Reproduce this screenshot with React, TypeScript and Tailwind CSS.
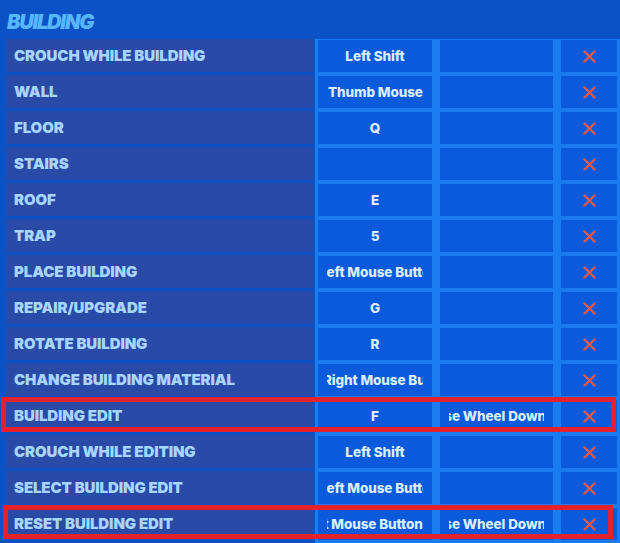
import React from "react";

interface Binding {
  label: string;
  primary?: string;
  secondary?: string;
  // offset classes for key names that are mid-scroll inside a narrow slot
  primaryShift?: string;
  secondaryShift?: string;
}

const bindings: Binding[] = [
  { label: "Crouch While Building", primary: "Left Shift" },
  { label: "Wall", primary: "Thumb Mouse Button", primaryShift: "justify-start ml-[1px]" },
  { label: "Floor", primary: "Q" },
  { label: "Stairs" },
  { label: "Roof", primary: "E" },
  { label: "Trap", primary: "5" },
  { label: "Place Building", primary: "Left Mouse Button", primaryShift: "justify-start -ml-[8px]" },
  { label: "Repair/Upgrade", primary: "G" },
  { label: "Rotate Building", primary: "R" },
  { label: "Change Building Material", primary: "Right Mouse Button", primaryShift: "justify-start -ml-[4px]" },
  {
    label: "Building Edit",
    primary: "F",
    secondary: "Mouse Wheel Down",
    secondaryShift: "justify-start -ml-[34px]",
  },
  { label: "Crouch While Editing", primary: "Left Shift" },
  { label: "Select Building Edit", primary: "Left Mouse Button", primaryShift: "justify-start -ml-[8px]" },
  {
    label: "Reset Building Edit",
    primary: "Left Mouse Button",
    primaryShift: "justify-start -ml-[24px]",
    secondary: "Mouse Wheel Down",
    secondaryShift: "justify-start -ml-[34px]",
  },
];

function KeySlot({ value, shift, wide }: { value?: string; shift?: string; wide: boolean }) {
  return (
    <div className={`${wide ? "w-[114px]" : "w-[113px]"} h-[32px] bg-[#0a5adb] px-[9px]`}>
      <div className="h-full overflow-hidden">
        <div
          className={`flex h-full items-center whitespace-nowrap ${shift ?? "justify-center"} text-[13.5px] font-extrabold tracking-[-0.1px] text-[#d9eeff]`}
        >
          {value}
        </div>
      </div>
    </div>
  );
}

function ClearButton() {
  return (
    <div className="flex h-[32px] w-[56px] items-center justify-center bg-[#0a5adb]">
      <svg width="15" height="15" viewBox="0 0 15 15">
        <path d="M2.5 2.5 L12.5 12.5 M12.5 2.5 L2.5 12.5" stroke="#e05a4c" strokeWidth="2.4" strokeLinecap="round" />
      </svg>
    </div>
  );
}

function BindingRow({ item }: { item: Binding }) {
  return (
    <div className="flex h-[36px]">
      <div className="ml-[6px] flex h-[33px] w-[307px] items-center bg-[#2a4aa8] pl-[8px] pt-[1px] text-[15px] font-black uppercase tracking-[-0.1px] text-[#a8d5ff]">
        {item.label}
      </div>
      <div className="ml-[2px] flex flex-1 gap-[8px] bg-[#1a7cf0] pl-[3px] pt-[1px]">
        <KeySlot value={item.primary} shift={item.primaryShift} wide />
        <KeySlot value={item.secondary} shift={item.secondaryShift} wide={false} />
        <ClearButton />
      </div>
    </div>
  );
}

export default function App() {
  return (
    <div
      className="relative h-[543px] w-[620px] overflow-hidden bg-[#0b52c6]"
      style={{ fontFamily: "Inter, \"Liberation Sans\", sans-serif" }}
    >
      <div className="flex h-[39px] items-center pl-[7px] pt-[4px]">
        <h1 className="text-[20px] font-black italic tracking-[-1.2px] text-[#58b6ff]">BUILDING</h1>
      </div>
      <div className="flex flex-col">
        {bindings.map((item) => (
          <BindingRow key={item.label} item={item} />
        ))}
      </div>

      {/* highlight frames over the edit rows */}
      <div className="pointer-events-none absolute left-[1px] top-[397px] h-[35px] w-[615px] border-[5px] border-[#e5222c]" />
      <div className="pointer-events-none absolute left-[3px] top-[505px] h-[34px] w-[610px] border-[5px] border-[#e5222c]" />
    </div>
  );
}
